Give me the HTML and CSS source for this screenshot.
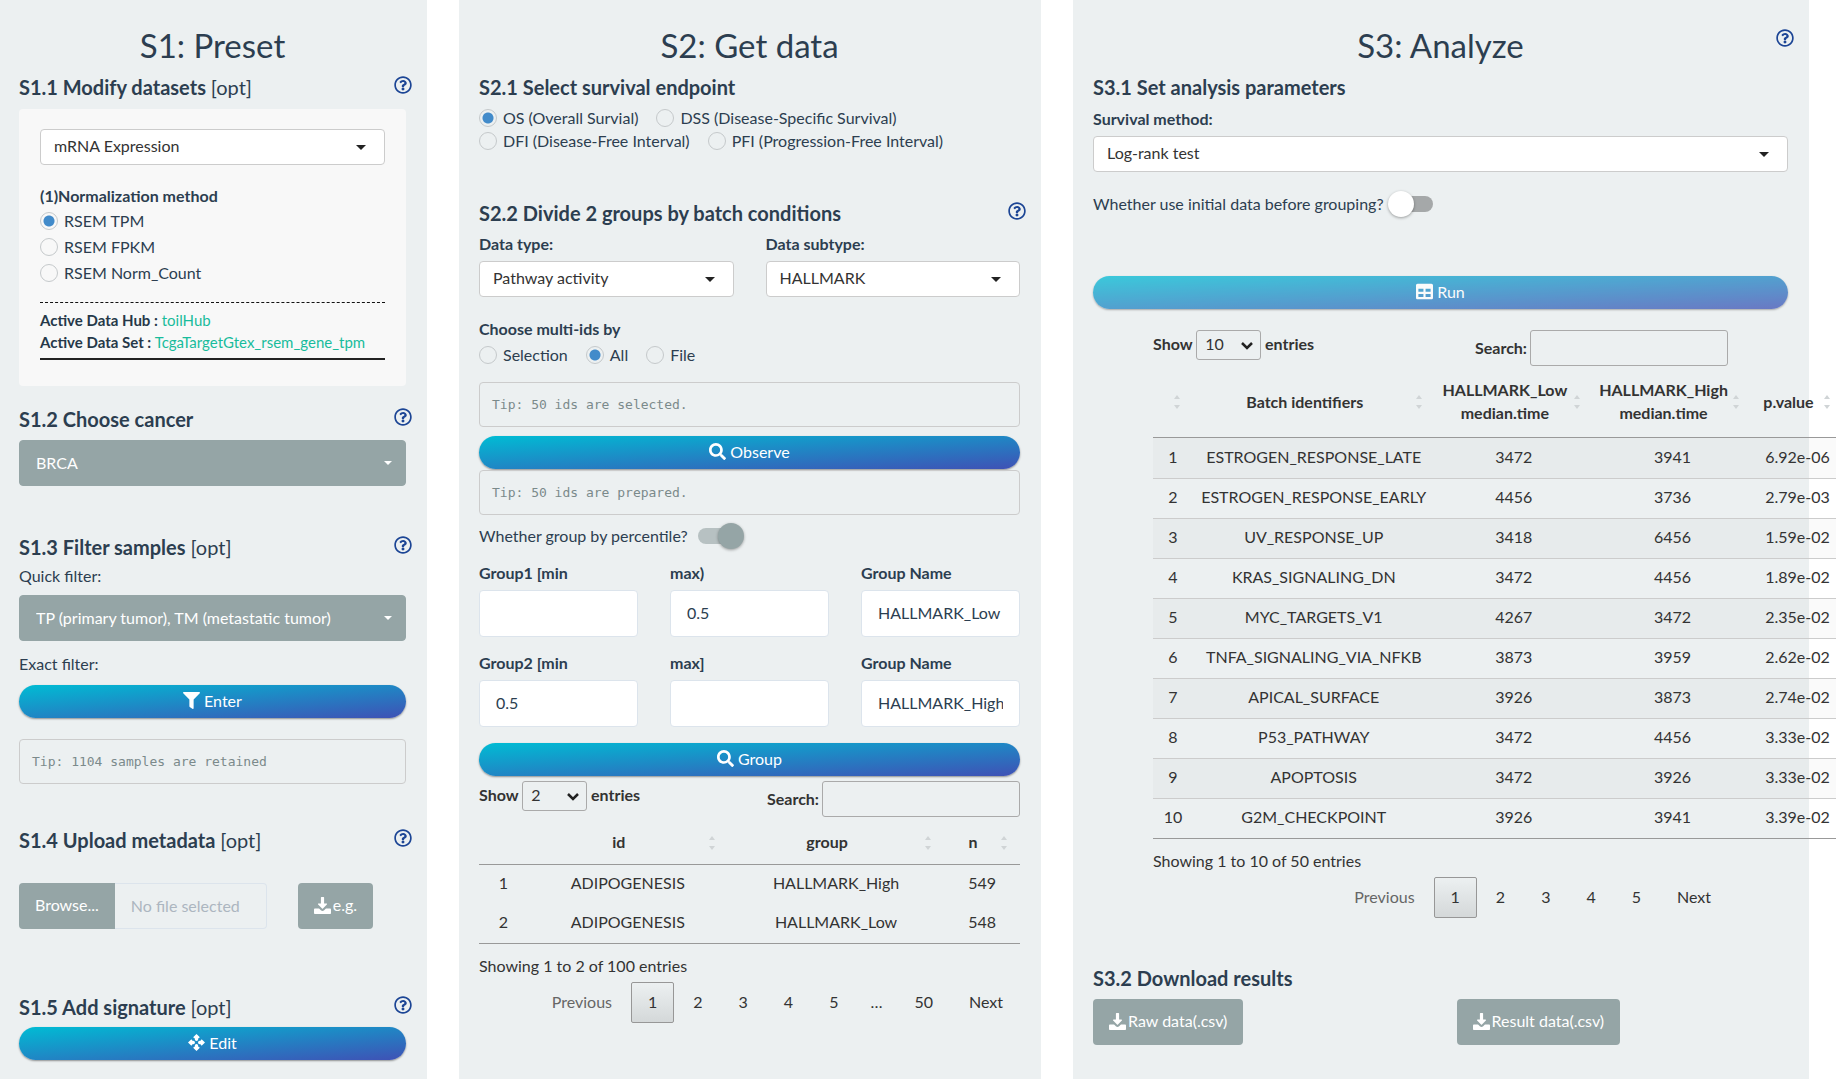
FILE: index.html
```html
<!DOCTYPE html>
<html lang="en">
<head>
<meta charset="utf-8">
<meta name="viewport" content="width=device-width, initial-scale=1">
<title>Batch survival analysis</title>
<link rel="stylesheet" href="styles.css">
</head>
<body>
<svg class="sprite" aria-hidden="true">
  <symbol id="help" viewBox="0 0 512 512"><path d="M256 8C119 8 8 119 8 256s111 248 248 248 248-111 248-248S393 8 256 8zm0 448c-110.500 0-200-89.400-200-200 0-110.500 89.500-200 200-200 110.500 0 200 89.500 200 200 0 110.600-89.400 200-200 200zm107.200-255.200c0 67.100-72.400 68.100-72.400 92.900V300c0 6.600-5.400 12-12 12h-45.600c-6.600 0-12-5.400-12-12v-8.700c0-35.700 27.100-50 47.600-61.500 17.600-9.800 28.300-16.500 28.300-29.600 0-17.200-22-28.700-39.800-28.700-23.200 0-33.900 11-49 30-4.100 5.100-11.500 6.100-16.700 2.100l-27.800-21.100c-5.100-3.900-6.300-11.100-2.600-16.400C184.800 131.500 214.900 112 261.800 112c49.100 0 101.500 38.300 101.500 88.800zM298 368c0 23.200-18.800 42-42 42s-42-18.800-42-42 18.800-42 42-42 42 18.800 42 42z"/></symbol>
  <symbol id="filter" viewBox="0 0 512 512"><path d="M488 0H24C3 0-8 26 7 41l185 185v206c0 8 4 15 10 20l80 56c16 11 38 0 38-20V226L505 41c15-15 4-41-17-41z"/></symbol>
  <symbol id="search" viewBox="0 0 512 512"><path d="M505 443L405 343c-5-5-11-7-17-7h-16c28-35 44-80 44-128C416 93 323 0 208 0S0 93 0 208s93 208 208 208c48 0 93-16 128-44v16c0 6 2 12 7 17l100 100c9 9 24 9 34 0l28-28c9-10 9-25 0-34zM208 336c-71 0-128-57-128-128S137 80 208 80s128 57 128 128-57 128-128 128z"/></symbol>
  <symbol id="move" viewBox="0 0 512 512"><path d="M256 0l86 86c15 15 4 41-17 41h-19v32c0 28-22 50-50 50s-50-22-50-50v-32h-19c-21 0-32-26-17-41zM256 512l86-86c15-15 4-41-17-41h-19v-32c0-28-22-50-50-50s-50 22-50 50v32h-19c-21 0-32 26-17 41zM0 256l86-86c15-15 41-4 41 17v19h32c28 0 50 22 50 50s-22 50-50 50h-32v19c0 21-26 32-41 17zM512 256l-86-86c-15-15-41-4-41 17v19h-32c-28 0-50 22-50 50s22 50 50 50h32v19c0 21 26 32 41 17z"/></symbol>
  <symbol id="grid" viewBox="0 0 512 512"><path fill-rule="evenodd" d="M464 20H48C21 20 0 42 0 68v376c0 27 21 48 48 48h416c27 0 48-21 48-48V68c0-26-21-48-48-48zM224 420H72v-90h152zm0-154H72v-90h152zm216 154H288v-90h152zm0-154H288v-90h152z"/></symbol>
  <symbol id="download" viewBox="0 0 512 512"><path d="M226 0h60c10 0 18 8 18 18v180h70c18 0 25 18 13 30L270 345c-8 8-20 8-28 0L125 228c-12-12-5-30 13-30h70V18c0-10 8-18 18-18zM24 350h128l55 50c28 26 70 26 98 0l55-50h128c13 0 24 11 24 24v114c0 13-11 24-24 24H24c-13 0-24-11-24-24V374c0-13 11-24 24-24z"/></symbol>
</svg>

<main class="workspace">

  <section class="panel">
    <h2 class="title">S1: Preset</h2>

    <section class="step step-datasets">
      <div class="step-head"><h4>S1.1 Modify datasets <span class="opt">[opt]</span></h4><button class="help" aria-label="Help"><svg><use href="#help"/></svg></button></div>
      <div class="well">
        <select class="picker" aria-label="Data category"><option>mRNA Expression</option></select>
        <fieldset class="stack">
          <legend class="strong">(1)Normalization method</legend>
          <label class="radio"><input type="radio" name="norm" checked>RSEM TPM</label>
          <label class="radio"><input type="radio" name="norm">RSEM FPKM</label>
          <label class="radio"><input type="radio" name="norm">RSEM Norm_Count</label>
        </fieldset>
        <div class="active">
          <div><b>Active Data Hub :</b> <span class="value">toilHub</span></div>
          <div><b>Active Data Set :</b> <span class="value">TcgaTargetGtex_rsem_gene_tpm</span></div>
        </div>
      </div>
    </section>

    <section class="step step-cancer">
      <div class="step-head"><h4>S1.2 Choose cancer</h4><button class="help" aria-label="Help"><svg><use href="#help"/></svg></button></div>
      <select class="picker picker-solid" aria-label="Cancer"><option>BRCA</option></select>
    </section>

    <section class="step step-filter">
      <div class="step-head"><h4>S1.3 Filter samples <span class="opt">[opt]</span></h4><button class="help" aria-label="Help"><svg><use href="#help"/></svg></button></div>
      <label class="caption" for="quick">Quick filter:</label>
      <select class="picker picker-solid" id="quick"><option>TP (primary tumor), TM (metastatic tumor)</option></select>
      <div class="caption exact">Exact filter:</div>
      <button class="pill"><svg><use href="#filter"/></svg>Enter</button>
      <pre class="tip">Tip: 1104 samples are retained</pre>
    </section>

    <section class="step step-upload">
      <div class="step-head"><h4>S1.4 Upload metadata <span class="opt">[opt]</span></h4><button class="help" aria-label="Help"><svg><use href="#help"/></svg></button></div>
      <div class="upload">
        <button class="btn browse">Browse...</button>
        <input class="filename" type="text" placeholder="No file selected" aria-label="Selected file" readonly>
        <button class="btn"><svg><use href="#download"/></svg>e.g.</button>
      </div>
    </section>

    <section class="step step-signature">
      <div class="step-head"><h4>S1.5 Add signature <span class="opt">[opt]</span></h4><button class="help" aria-label="Help"><svg><use href="#help"/></svg></button></div>
      <button class="pill"><svg><use href="#move"/></svg>Edit</button>
    </section>
  </section>

  <section class="panel">
    <h2 class="title">S2: Get data</h2>

    <section class="step step-endpoint">
      <div class="step-head"><h4>S2.1 Select survival endpoint</h4></div>
      <div class="inline endpoints">
        <label class="radio"><input type="radio" name="end" checked>OS (Overall Survial)</label>
        <label class="radio"><input type="radio" name="end">DSS (Disease-Specific Survival)</label>
      </div>
      <div class="inline">
        <label class="radio"><input type="radio" name="end">DFI (Disease-Free Interval)</label>
        <label class="radio"><input type="radio" name="end">PFI (Progression-Free Interval)</label>
      </div>
    </section>

    <section class="step step-divide">
      <div class="step-head"><h4>S2.2 Divide 2 groups by batch conditions</h4><button class="help" aria-label="Help"><svg><use href="#help"/></svg></button></div>
      <div class="pair">
        <div><label class="strong" for="dtype">Data type:</label><select class="picker" id="dtype"><option>Pathway activity</option></select></div>
        <div><label class="strong" for="dsub">Data subtype:</label><select class="picker" id="dsub"><option>HALLMARK</option></select></div>
      </div>
      <fieldset class="ids">
        <legend class="strong">Choose multi-ids by</legend>
        <div class="inline">
          <label class="radio"><input type="radio" name="ids">Selection</label>
          <label class="radio"><input type="radio" name="ids" checked>All</label>
          <label class="radio"><input type="radio" name="ids">File</label>
        </div>
      </fieldset>
      <pre class="tip">Tip: 50 ids are selected.</pre>
      <button class="pill observe"><svg><use href="#search"/></svg>Observe</button>
      <pre class="tip">Tip: 50 ids are prepared.</pre>
      <label class="toggle">Whether group by percentile?<input type="checkbox" class="switch" checked></label>
      <div class="triple">
        <div><label class="strong" for="g1min">Group1 [min</label><input class="field" id="g1min" type="text"></div>
        <div><label class="strong" for="g1max">max)</label><input class="field" id="g1max" type="text" value="0.5"></div>
        <div><label class="strong" for="g1name">Group Name</label><input class="field" id="g1name" type="text" value="HALLMARK_Low"></div>
        <div><label class="strong" for="g2min">Group2 [min</label><input class="field" id="g2min" type="text" value="0.5"></div>
        <div><label class="strong" for="g2max">max]</label><input class="field" id="g2max" type="text"></div>
        <div><label class="strong" for="g2name">Group Name</label><input class="field" id="g2name" type="text" value="HALLMARK_High"></div>
      </div>
      <button class="pill"><svg><use href="#search"/></svg>Group</button>
    </section>

    <div class="grid-view">
      <div class="grid-tools">
        <label>Show <select class="length"><option>2</option></select> entries</label>
        <label class="find">Search:<input type="search"></label>
      </div>
      <table class="plain">
        <colgroup><col class="p1"><col class="p2"><col class="p3"><col class="p4"></colgroup>
        <thead><tr><td></td><th>id</th><th>group</th><th>n</th></tr></thead>
        <tbody>
          <tr><td>1</td><td>ADIPOGENESIS</td><td>HALLMARK_High</td><td>549</td></tr>
          <tr><td>2</td><td>ADIPOGENESIS</td><td>HALLMARK_Low</td><td>548</td></tr>
        </tbody>
      </table>
      <div class="info">Showing 1 to 2 of 100 entries</div>
      <nav class="pages" aria-label="Group pages">
        <a class="off" href="#">Previous</a><a class="current" href="#">1</a><a href="#">2</a><a href="#">3</a><a href="#">4</a><a href="#">5</a><span>…</span><a href="#">50</a><a href="#">Next</a>
      </nav>
    </div>
  </section>

  <section class="panel">
    <button class="help corner" aria-label="Help"><svg><use href="#help"/></svg></button>
    <h2 class="title">S3: Analyze</h2>

    <section class="step step-params">
      <div class="step-head"><h4>S3.1 Set analysis parameters</h4></div>
      <label class="strong" for="method">Survival method:</label>
      <select class="picker" id="method"><option>Log-rank test</option></select>
      <label class="toggle">Whether use initial data before grouping?<input type="checkbox" class="switch"></label>
      <button class="pill faded"><svg><use href="#grid"/></svg>Run</button>
    </section>

    <div class="grid-view inset">
      <div class="grid-tools">
        <label>Show <select class="length"><option>10</option></select> entries</label>
        <label class="find">Search:<input type="search"></label>
      </div>
      <table class="striped">
        <colgroup><col class="r1"><col class="r2"><col class="r3"><col class="r4"><col></colgroup>
        <thead><tr><th></th><th>Batch identifiers</th><th>HALLMARK_Low median.time</th><th>HALLMARK_High median.time</th><th>p.value</th></tr></thead>
        <tbody>
          <tr><td>1</td><td>ESTROGEN_RESPONSE_LATE</td><td>3472</td><td>3941</td><td>6.92e-06</td></tr>
          <tr><td>2</td><td>ESTROGEN_RESPONSE_EARLY</td><td>4456</td><td>3736</td><td>2.79e-03</td></tr>
          <tr><td>3</td><td>UV_RESPONSE_UP</td><td>3418</td><td>6456</td><td>1.59e-02</td></tr>
          <tr><td>4</td><td>KRAS_SIGNALING_DN</td><td>3472</td><td>4456</td><td>1.89e-02</td></tr>
          <tr><td>5</td><td>MYC_TARGETS_V1</td><td>4267</td><td>3472</td><td>2.35e-02</td></tr>
          <tr><td>6</td><td>TNFA_SIGNALING_VIA_NFKB</td><td>3873</td><td>3959</td><td>2.62e-02</td></tr>
          <tr><td>7</td><td>APICAL_SURFACE</td><td>3926</td><td>3873</td><td>2.74e-02</td></tr>
          <tr><td>8</td><td>P53_PATHWAY</td><td>3472</td><td>4456</td><td>3.33e-02</td></tr>
          <tr><td>9</td><td>APOPTOSIS</td><td>3472</td><td>3926</td><td>3.33e-02</td></tr>
          <tr><td>10</td><td>G2M_CHECKPOINT</td><td>3926</td><td>3941</td><td>3.39e-02</td></tr>
        </tbody>
      </table>
      <div class="info">Showing 1 to 10 of 50 entries</div>
      <nav class="pages" aria-label="Result pages">
        <a class="off" href="#">Previous</a><a class="current" href="#">1</a><a href="#">2</a><a href="#">3</a><a href="#">4</a><a href="#">5</a><a href="#">Next</a>
      </nav>
    </div>

    <section class="step step-download">
      <div class="step-head"><h4>S3.2 Download results</h4></div>
      <div class="downloads">
        <div><button class="btn"><svg><use href="#download"/></svg>Raw data(.csv)</button></div>
        <div><button class="btn"><svg><use href="#download"/></svg>Result data(.csv)</button></div>
      </div>
    </section>
  </section>

</main>
</body>
</html>
```
FILE: styles.css
```css
* { box-sizing: border-box; }

body {
  margin: 0;
  background: #fff;
  color: #2c3e50;
  font: 16px/22px Lato, sans-serif;
  overflow-x: hidden;
}

button, input, select { font: inherit; color: inherit; margin: 0; }
button { border: 0; cursor: pointer; }
fieldset { border: 0; margin: 0; padding: 0; min-width: 0; }
legend { padding: 0; }
h2, h4, pre { margin: 0; }
.sprite { display: none; }

.workspace {
  display: grid;
  grid-template-columns: 427fr 582fr 736fr;
  column-gap: 32px;
  padding-right: 27px;
  min-height: 100vh;
}

.panel {
  position: relative;
  background: #ecf0f1;
  padding: 26px 21px 16px 20px;
  min-width: 0;
}
.panel:first-child { padding-left: 19px; }

.title {
  font-size: 33px;
  line-height: 38px;
  font-weight: 400;
  text-align: center;
  margin-bottom: 12px;
}

.step-head { display: flex; justify-content: space-between; align-items: center; height: 22px; }
h4 { font-size: 20px; line-height: 22px; font-weight: 700; }
.opt { font-weight: 400; }
.strong { display: block; font-weight: 700; }
.caption { display: block; }

.help { padding: 0; background: none; color: #1c4595; width: 18px; height: 18px; margin: 0 -6px 4px 0; }
.help svg { display: block; width: 18px; height: 18px; fill: currentColor; }
.corner { position: absolute; top: 29px; right: 15px; margin: 0; }

.well { margin-top: 11px; padding: 20px 21px 26px; background: #f8f8f8; border-radius: 4px; }

.picker {
  appearance: none;
  display: block;
  width: 100%;
  height: 36px;
  padding: 0 40px 3px 13px;
  border: 1px solid #ccc;
  border-radius: 4px;
  color: #333;
  background: #fff url("data:image/svg+xml,%3Csvg xmlns='http://www.w3.org/2000/svg' width='10' height='5'%3E%3Cpath d='M0 0h10L5 5z' fill='%23222'/%3E%3C/svg%3E") no-repeat right 18px center;
}
.picker-solid {
  height: 46px;
  padding: 0 40px 1px 16px;
  border-color: #95a5a6;
  color: #fff;
  background: #95a5a6 url("data:image/svg+xml,%3Csvg xmlns='http://www.w3.org/2000/svg' width='8' height='4'%3E%3Cpath d='M0 0h8L4 4z' fill='%23fff'/%3E%3C/svg%3E") no-repeat right 13px center;
}

.stack { margin-top: 20px; }
.stack legend { margin-bottom: 1px; }
.radio { display: flex; align-items: center; gap: 6px; height: 22px; }
.stack .radio { height: 26px; }
.radio input {
  appearance: none;
  flex: none;
  width: 18px;
  height: 18px;
  border: 1px solid #c5c9cb;
  border-radius: 50%;
}
.radio input:checked { background: radial-gradient(circle, #428bca 5px, transparent 6px); }
.inline { display: flex; gap: 18px; }
.endpoints { margin: 9px 0 1px; }

.active {
  margin-top: 16px;
  padding: 6px 0 5px;
  border-top: 1px dashed #111;
  border-bottom: 2px solid #222;
  font-size: 15px;
  white-space: nowrap;
}
.active b { color: #263849; }
.value { color: #18bc9c; }

.pill {
  display: flex;
  align-items: center;
  justify-content: center;
  gap: 4px;
  width: 100%;
  height: 33px;
  padding: 0 0 2px;
  border-radius: 17px;
  color: #fff;
  background: linear-gradient(to bottom right, #00bcd4, #3f51b5);
  box-shadow: 0 1px 2px rgba(0, 0, 0, .4);
}
.faded { opacity: .75; }
.pill svg, .btn svg { width: 17px; height: 17px; fill: currentColor; flex: none; }

.tip {
  height: 45px;
  padding: 0 12px;
  border: 1px solid #ccc;
  border-radius: 4px;
  color: #7b8a8b;
  font: 13px/43px "DejaVu Sans Mono", monospace;
}

.btn {
  display: inline-flex;
  align-items: center;
  gap: 2px;
  height: 46px;
  padding: 0 16px 2px;
  border-radius: 4px;
  color: #fff;
  background: #95a5a6;
}

.step-cancer { margin-top: 22px; }
.step-cancer .picker { margin-top: 10px; }
.step-filter { margin-top: 50px; }
.step-filter .caption { margin: 7px 0 8px; }
.step-filter .exact { margin: 12px 0 10px; }
.step-filter .tip { margin-top: 21px; }
.step-upload { margin-top: 45px; }
.upload { display: flex; margin-top: 32px; }
.browse { border-radius: 4px 0 0 4px; }
.filename {
  width: 152px;
  height: 46px;
  margin-right: 31px;
  padding: 0 16px 2px;
  border: 1px solid #dce4ec;
  border-left: 0;
  border-radius: 0 4px 4px 0;
  background: none;
}
.filename::placeholder { color: #acb6c0; opacity: 1; }
.step-signature { margin-top: 67px; }
.step-signature .pill { margin-top: 9px; }

.step-divide { margin-top: 50px; }
.pair { display: grid; grid-template-columns: 1fr 1fr; column-gap: 32px; margin-top: 9px; }
.pair .picker { margin-top: 6px; }
.ids { margin-top: 21px; }
.ids .inline { margin-top: 4px; }
.ids + .tip { margin-top: 16px; }
.observe { margin: 9px 0 1px; }

.toggle { display: flex; align-items: center; gap: 10px; height: 24px; margin-top: 9px; }
.switch {
  appearance: none;
  position: relative;
  width: 42px;
  height: 16px;
  border-radius: 8px;
  background: #a5a8a9;
}
.switch::before {
  content: "";
  position: absolute;
  left: -3px;
  top: -5px;
  width: 26px;
  height: 26px;
  border-radius: 50%;
  background: #fff;
  box-shadow: 0 1px 3px rgba(0, 0, 0, .35);
}
.switch:checked { background: #b7c1c2; }
.switch:checked::before { left: 20px; background: #95a5a6; }

.triple { display: grid; grid-template-columns: repeat(3, 1fr); gap: 15px 32px; margin: 14px 0 16px; }
.field {
  display: block;
  width: 100%;
  height: 47px;
  margin-top: 6px;
  padding: 0 16px 2px;
  border: 1px solid #dce4ec;
  border-radius: 4px;
  background: #fff;
}

.grid-view { margin-top: 5px; color: #333; }
.inset { margin: 21px 60px 0; }
.grid-tools { display: flex; justify-content: space-between; align-items: flex-start; font-weight: 700; }
.length {
  appearance: none;
  width: 65px;
  height: 30px;
  padding: 0 24px 2px 8px;
  border: 1px solid #aaa;
  border-radius: 3px;
  font-weight: 400;
  background: url("data:image/svg+xml,%3Csvg xmlns='http://www.w3.org/2000/svg' width='14' height='9'%3E%3Cpath d='M2 2l5 5 5-5' fill='none' stroke='%23222' stroke-width='2.500'/%3E%3C/svg%3E") no-repeat right 6px center;
}
.find { display: flex; align-items: center; gap: 3px; }
.find input { appearance: none; width: 198px; height: 36px; border: 1px solid #aaa; border-radius: 3px; background: none; }

table { width: 100%; table-layout: fixed; border-collapse: separate; border-spacing: 0; text-align: center; border-bottom: 1px solid #999; }
th, td { height: 40px; padding: 0 0 3px; }
th {
  padding: 0 18px 1px 0;
  font-weight: 700;
  background: url("data:image/svg+xml,%3Csvg xmlns='http://www.w3.org/2000/svg' width='6' height='14'%3E%3Cpath d='M0 4h6L3 0zM0 10h6L3 14z' fill='%23d0d4d6'/%3E%3C/svg%3E") no-repeat right 13px center;
}
thead th, thead td { border-bottom: 1px solid #999; }
.plain { margin-top: 4px; }
.plain thead th, .plain thead td { height: 44px; }
.plain tbody td { height: 39px; }
.p1 { width: 9%; }
.p2 { width: 37%; }
.p3 { width: 40%; }
.p4 { width: 14%; }

/* Five columns need more room than the inset view offers. */
.striped { width: 120%; }
.striped thead th { height: 72px; line-height: 23px; }
.striped tbody td { border-top: 1px solid #ccc; }
.striped tbody tr:first-child td { border-top: 0; }
.striped tbody tr:nth-child(odd) { background: rgba(0, 0, 0, .02); }
.r1 { width: 40px; }
.r2 { width: 35%; }
.r3 { width: 23%; }
.r4 { width: 23%; }

.info { margin-top: 11px; }
.pages { display: flex; justify-content: flex-end; gap: 2px; margin-top: 5px; }
.pages a, .pages span {
  min-width: 43px;
  height: 41px;
  padding: 0 16px;
  border: 1px solid transparent;
  border-radius: 2px;
  color: #333;
  line-height: 37px;
  text-align: center;
  text-decoration: none;
}
.pages span { min-width: 0; padding: 0 12px; }
.pages .off { color: #666; }
.pages .current { border-color: #979797; background: linear-gradient(#ecf0f1, #d4d8d9); }

.step-params .strong { margin: 10px 0 6px; }
.step-params .toggle { margin-top: 20px; gap: 7px; }
.step-params .pill { margin-top: 60px; }
.step-download { margin-top: 49px; }
.downloads { display: grid; grid-template-columns: 363fr 331fr; margin-top: 10px; }
```
